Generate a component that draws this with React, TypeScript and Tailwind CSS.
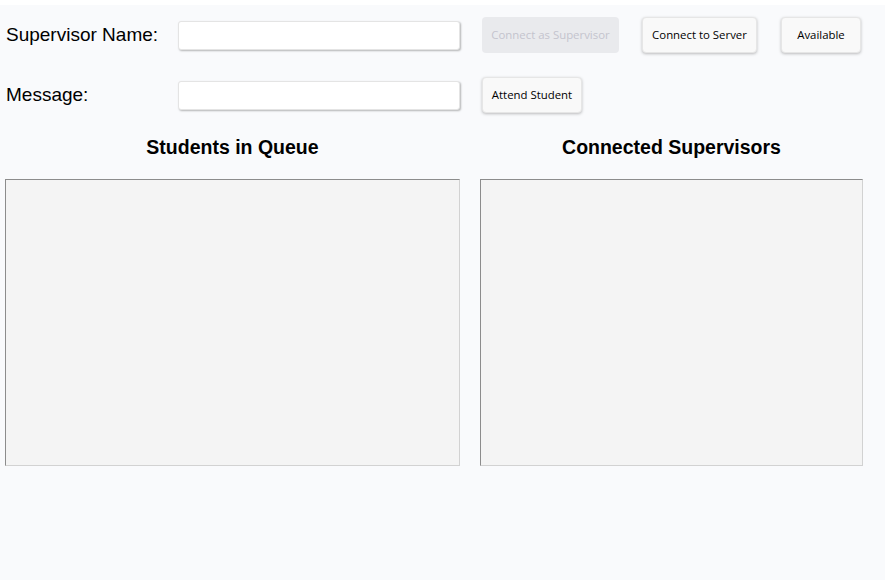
import React from "react"

const btn =
  "h-[36px] rounded-[4px] border border-[#e6e6e6] bg-[#f9f9f9] text-[11.4px] text-black shadow-[0_1px_3px_rgba(0,0,0,0.25)] font-['Open_Sans',sans-serif]"

const Field = () => (
  <input
    type="text"
    className="h-[29px] w-[282px] rounded-[3px] border border-[#e4e4e4] bg-white shadow-[1px_1px_2px_rgba(0,0,0,0.28)] outline-none"
  />
)

export default function App() {
  return (
    <div className="w-[887px] h-[581px] bg-white pt-[5px] font-['Liberation_Sans',Arial,sans-serif]">
      <div className="w-[885px] h-[575px] bg-[#f9fafc] px-[5px] pt-[12px]">
        {/* top row */}
        <div className="flex items-center h-[36px]">
          <label className="w-[173px] pl-[1px] text-[19px] text-black">Supervisor Name:</label>
          <Field />
          <div className="flex items-center gap-[23px] ml-[22px]">
            <button disabled className="h-[36px] w-[137px] rounded-[4px] bg-[#e9eaed] text-[11.4px] text-[#c4c4cd] font-['Open_Sans',sans-serif]">
              Connect as Supervisor
            </button>
            <button className={`${btn} w-[115px]`}>Connect to Server</button>
            <button className={`${btn} w-[80px] ml-px`}>Available</button>
          </div>
        </div>

        {/* second row */}
        <div className="flex items-center h-[36px] mt-[24px]">
          <label className="w-[173px] pl-[1px] text-[19px] text-black">Message:</label>
          <Field />
          <button className={`${btn} w-[100px] ml-[22px]`}>Attend Student</button>
        </div>

        {/* lists */}
        <div className="flex gap-[20px] mt-[22px]">
          <div className="flex flex-col w-[455px]">
            <h2 className="h-[24px] text-center text-[19.5px] font-bold leading-[24px] text-black">Students in Queue</h2>
            <div className="mt-[20px] h-[287px] border border-t-[#8c8c8c] border-l-[#8c8c8c] border-r-[#d2d2d2] border-b-[#d2d2d2] bg-[#f4f4f4]" />
          </div>
          <div className="flex flex-col w-[383px]">
            <h2 className="h-[24px] text-center text-[19.5px] font-bold leading-[24px] text-black">Connected Supervisors</h2>
            <div className="mt-[20px] h-[287px] border border-t-[#8c8c8c] border-l-[#8c8c8c] border-r-[#d2d2d2] border-b-[#d2d2d2] bg-[#f4f4f4]" />
          </div>
        </div>
      </div>
    </div>
  )
}
